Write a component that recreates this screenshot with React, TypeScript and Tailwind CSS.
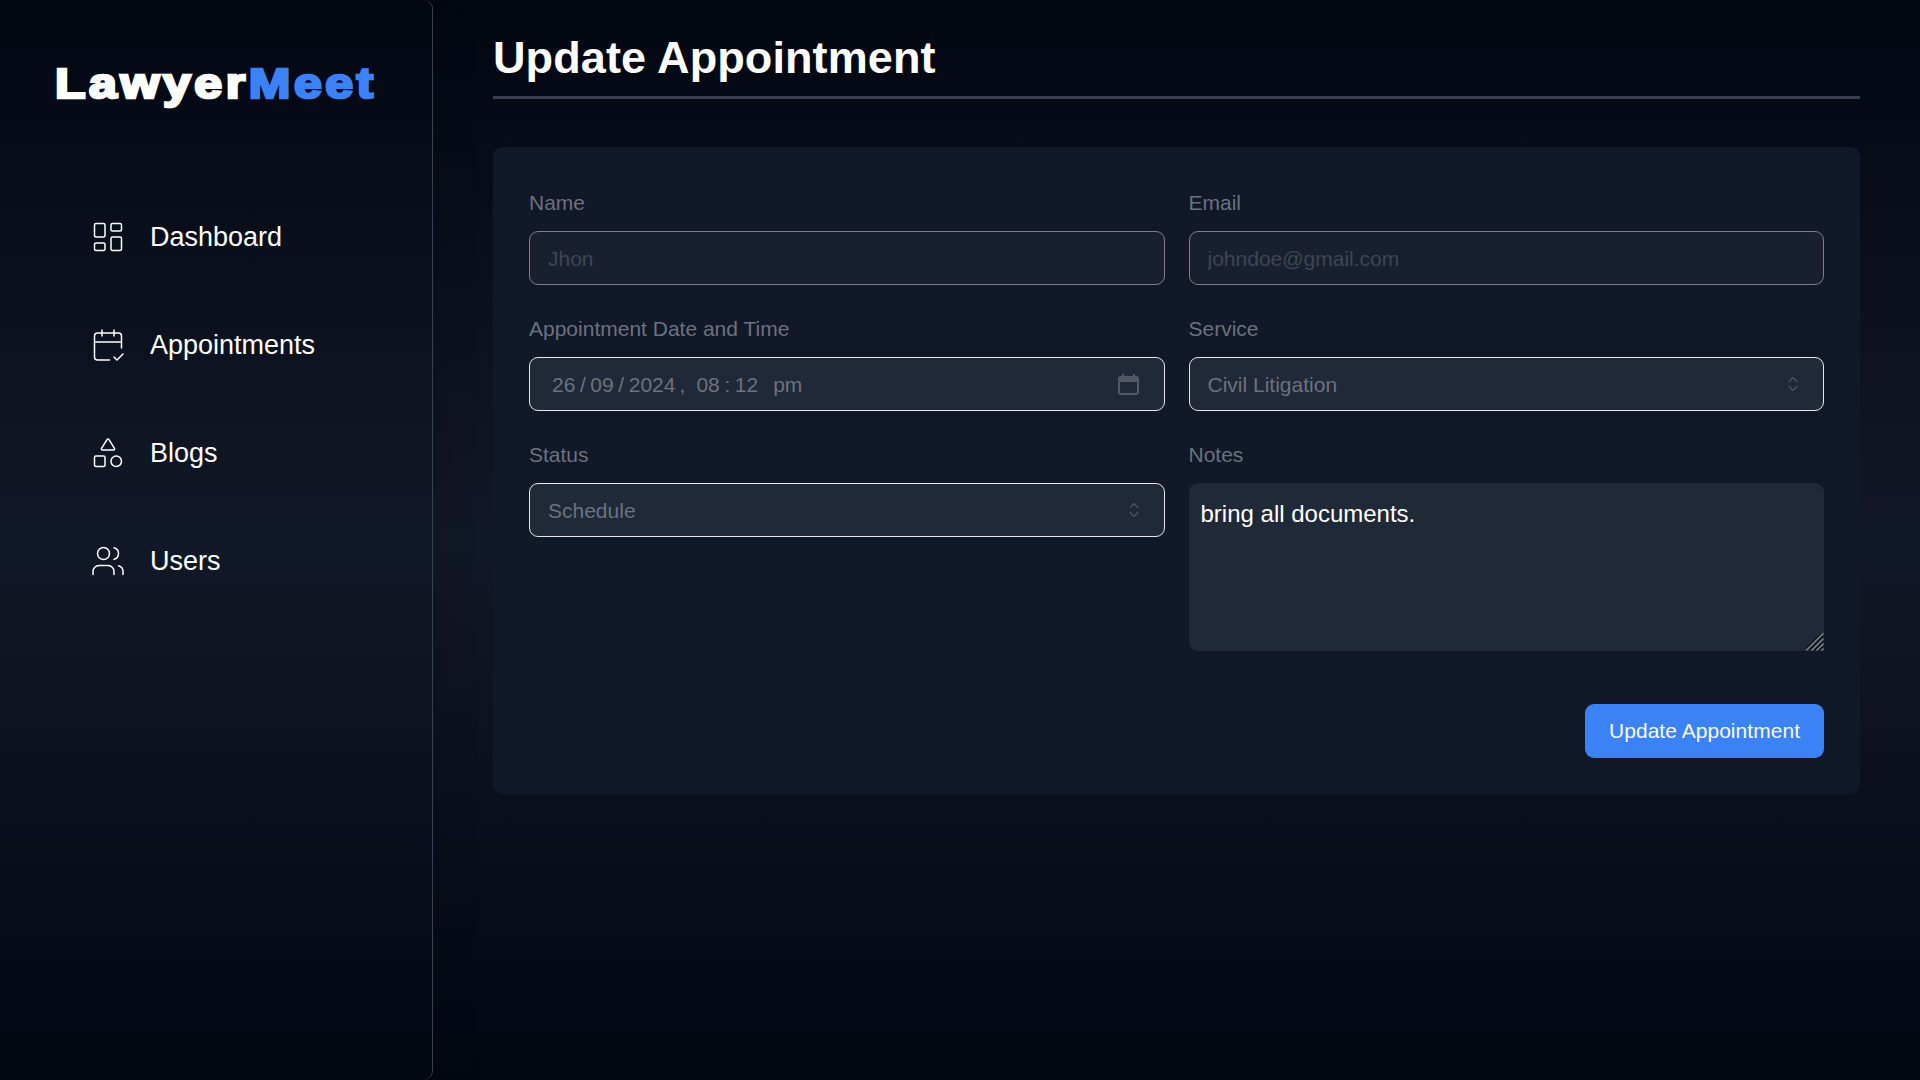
import { CalendarCheck2, LayoutDashboard, Shapes, Users } from "lucide-react";
import type { LucideIcon } from "lucide-react";
import type { ReactNode } from "react";

const navItems: { label: string; icon: LucideIcon }[] = [
  { label: "Dashboard", icon: LayoutDashboard },
  { label: "Appointments", icon: CalendarCheck2 },
  { label: "Blogs", icon: Shapes },
  { label: "Users", icon: Users },
];

function Sidebar() {
  return (
    <aside className="flex h-full w-[433px] shrink-0 flex-col rounded-r-[9px] border-r border-[#374151] shadow-2xl">
      <div className="flex h-[168px] items-center pl-[55px]">
        <h1 className="origin-left scale-x-[1.19] text-[42px] leading-none font-bold tracking-[3px] text-white [-webkit-text-stroke:2.6px_currentColor]">
          Lawyer<span className="text-[#3b82f6]">Meet</span>
        </h1>
      </div>
      <nav className="mt-[33px] flex flex-col gap-9 pl-[90px]">
        {navItems.map(({ label, icon: Icon }) => (
          <a key={label} className="flex h-[72px] items-center gap-6 text-[27px] text-white">
            <Icon size={36} strokeWidth={1} />
            {label}
          </a>
        ))}
      </nav>
    </aside>
  );
}

function Field({ label, children }: { label: string; children: ReactNode }) {
  return (
    <div className="flex flex-col">
      <label className="mb-[9px] text-[21px] leading-[39px] text-[#6b7280]">{label}</label>
      {children}
    </div>
  );
}

function CaretSort() {
  return (
    <svg width="24" height="24" viewBox="0 0 15 15" fill="none" className="text-[#6b7280] opacity-60">
      <path
        d="M4.93179 5.43179C4.75605 5.60753 4.75605 5.89245 4.93179 6.06819C5.10753 6.24392 5.39245 6.24392 5.56819 6.06819L7.49999 4.13638L9.43179 6.06819C9.60753 6.24392 9.89245 6.24392 10.0682 6.06819C10.2439 5.89245 10.2439 5.60753 10.0682 5.43179L7.81819 3.18179C7.73379 3.0974 7.61933 3.04999 7.49999 3.04999C7.38064 3.04999 7.26618 3.0974 7.18179 3.18179L4.93179 5.43179ZM10.0682 9.56819C10.2439 9.39245 10.2439 9.10753 10.0682 8.93179C9.89245 8.75606 9.60753 8.75606 9.43179 8.93179L7.49999 10.8636L5.56819 8.93179C5.39245 8.75606 5.10753 8.75606 4.93179 8.93179C4.75605 9.10753 4.75605 9.39245 4.93179 9.56819L7.18179 11.8182C7.35753 11.9939 7.64245 11.9939 7.81819 11.8182L10.0682 9.56819Z"
        fill="currentColor"
        fillRule="evenodd"
        clipRule="evenodd"
      />
    </svg>
  );
}

function SelectBox({ value }: { value: string }) {
  return (
    <button
      type="button"
      className="flex h-[54px] items-center justify-between rounded-[9px] border border-[#e5e7eb] bg-[#1f2937] px-[18px] text-[21px] text-[#6b7280]"
    >
      <span className="pt-0.5">{value}</span>
      <CaretSort />
    </button>
  );
}

function TextInput({ placeholder }: { placeholder: string }) {
  return (
    <input
      disabled
      placeholder={placeholder}
      className="h-[54px] rounded-[9px] border border-[#e5e7eb] bg-[#1f2937] px-[18px] pt-0.5 text-[21px] opacity-50 placeholder:text-[#6b7280]"
    />
  );
}

function DateTimeBox() {
  return (
    <div className="flex h-[54px] items-center justify-between rounded-[9px] border border-[#e5e7eb] bg-[#1f2937] pr-[25px] pl-[22px] text-[21px] text-[#6b7280]">
      <div className="flex pt-0.5 whitespace-pre">
        <span>26</span>
        <span className="w-[15px] text-center">/</span>
        <span>09</span>
        <span className="w-[15px] text-center">/</span>
        <span>2024</span>
        <span className="w-[21px] pl-1">,</span>
        <span>08</span>
        <span className="w-[15px] text-center">:</span>
        <span>12</span>
        <span className="pl-[15px]">pm</span>
      </div>
      <svg width="21" height="21" viewBox="0 0 21 21" fill="none" className="text-[#525866]">
        <rect x="1" y="3" width="19" height="17" rx="2" stroke="currentColor" strokeWidth="2" />
        <path d="M1 3h19v5H1zM4 0h2v3H4zM15 0h2v3h-2z" fill="currentColor" />
      </svg>
    </div>
  );
}

function NotesBox() {
  return (
    <div className="relative flex">
      <textarea
        defaultValue="bring all documents."
        className="h-[168px] w-full resize-none rounded-[9px] rounded-br-none bg-[#1f2937] p-3 pt-[13px] text-2xl leading-9 text-white"
      />
      <svg width="18" height="18" viewBox="0 0 18 18" fill="none" className="pointer-events-none absolute right-0 bottom-0">
        <path d="M-1 17L17 -1M4 17L17 4M9 17L17 9M14 17L17 14" stroke="#0d131c" strokeWidth="1.6" />
        <path d="M0 17.500L17.500 0M5.500 17.500L17.500 5.500M10.500 17.500L17.500 10.500M15.500 17.500L17.500 15.500" stroke="#8d9196" strokeWidth="1.2" />
      </svg>
    </div>
  );
}

export default function App() {
  return (
    <div className="flex h-screen w-screen overflow-hidden bg-linear-to-b/srgb from-[#030712] via-[#111827] to-[#030712] font-['Liberation_Sans',Arial,sans-serif]">
      <Sidebar />
      <main className="flex flex-1 flex-col px-15 pt-[31px]">
        <h2 className="border-b-3 border-[#374151] pb-[11px] text-[45px] leading-[54px] font-bold tracking-[0.1px] text-white">
          Update Appointment
        </h2>
        <form className="mt-12 rounded-[9px] bg-[#111827] p-9">
          <div className="grid grid-cols-2 gap-6">
            <Field label="Name">
              <TextInput placeholder="Jhon" />
            </Field>
            <Field label="Email">
              <TextInput placeholder="johndoe@gmail.com" />
            </Field>
            <Field label="Appointment Date and Time">
              <DateTimeBox />
            </Field>
            <Field label="Service">
              <SelectBox value="Civil Litigation" />
            </Field>
            <Field label="Status">
              <SelectBox value="Schedule" />
            </Field>
            <Field label="Notes">
              <NotesBox />
            </Field>
          </div>
          <div className="mt-[53px] flex justify-end">
            <button
              type="button"
              className="h-[54px] w-[239px] rounded-[9px] bg-[#3b82f6] text-[21px] tracking-[0.04px] text-[#f9fafb]"
            >
              Update Appointment
            </button>
          </div>
        </form>
      </main>
    </div>
  );
}
